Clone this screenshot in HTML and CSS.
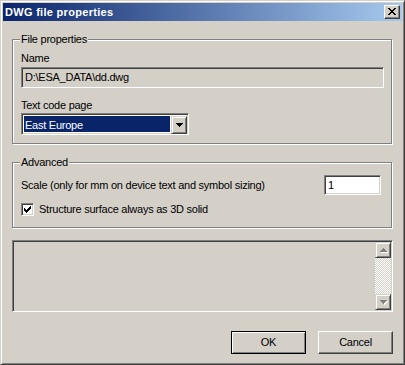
FILE: index.html
```html
<!DOCTYPE html>
<html>
<head>
<meta charset="utf-8">
<link rel="stylesheet" href="styles.css">
</head>
<body>
<div class="window">
  <div class="titlebar">
    <span class="title">DWG file properties</span>
    <span class="close-btn">
      <svg width="8" height="7" viewBox="0 0 8 7" shape-rendering="crispEdges"><path fill="#000" d="M0 0h2v1h-2zM6 0h2v1h-2zM1 1h2v1h-2zM5 1h2v1h-2zM2 2h4v1h-4zM3 3h2v1h-2zM2 4h4v1h-4zM1 5h2v1h-2zM5 5h2v1h-2zM0 6h2v1h-2zM6 6h2v1h-2z"/></svg>
    </span>
  </div>
  <div class="client">
    <div class="group group-file">
      <span class="legend">File properties</span>
      <div class="label">Name</div>
      <div class="edit edit-disabled edit-name">D:\ESA_DATA\dd.dwg</div>
      <div class="label label-gap">Text code page</div>
      <div class="combo">
        <div class="combo-value">East Europe</div>
        <div class="combo-btn">
          <svg width="7" height="4" viewBox="0 0 7 4" shape-rendering="crispEdges"><path fill="#000" d="M0 0h7v1h-7zM1 1h5v1h-5zM2 2h3v1h-3zM3 3h1v1h-1z"/></svg>
        </div>
      </div>
    </div>
    <div class="group group-adv">
      <span class="legend">Advanced</span>
      <div class="row-scale">
        <span class="text">Scale (only for mm on device text and symbol sizing)</span>
        <div class="edit edit-scale">1</div>
      </div>
      <div class="row-check">
        <span class="checkbox">
          <svg width="7" height="7" viewBox="0 0 7 7" shape-rendering="crispEdges"><path fill="#000" d="M6 0h1v1h-1zM5 1h2v1h-2zM0 2h1v1h-1zM4 2h3v1h-3zM0 3h2v1h-2zM3 3h3v1h-3zM0 4h5v1h-5zM1 5h3v1h-3zM2 6h1v1h-1z"/></svg>
        </span>
        <span class="text">Structure surface always as 3D solid</span>
      </div>
    </div>
    <div class="listbox">
      <div class="list-body"></div>
      <div class="vscroll">
        <div class="sb-btn">
          <svg width="8" height="5" viewBox="0 0 8 5" shape-rendering="crispEdges"><path fill="#fff" d="M4 1h1v1h-1zM3 2h3v1h-3zM2 3h5v1h-5zM1 4h7v1h-7z"/><path fill="#808080" d="M3 0h1v1h-1zM2 1h3v1h-3zM1 2h5v1h-5zM0 3h7v1h-7z"/></svg>
        </div>
        <div class="sb-track"></div>
        <div class="sb-btn">
          <svg width="8" height="5" viewBox="0 0 8 5" shape-rendering="crispEdges"><path fill="#fff" d="M1 1h7v1h-7zM2 2h5v1h-5zM3 3h3v1h-3zM4 4h1v1h-1z"/><path fill="#808080" d="M0 0h7v1h-7zM1 1h5v1h-5zM2 2h3v1h-3zM3 3h1v1h-1z"/></svg>
        </div>
      </div>
    </div>
    <div class="buttons">
      <div class="btn btn-default">OK</div>
      <div class="btn">Cancel</div>
    </div>
  </div>
</div>
</body>
</html>
```
FILE: styles.css
```css
* { box-sizing: border-box; }
html, body { margin: 0; padding: 0; }
body {
  background: #d4d0c8;
  font-family: "Liberation Sans", Arial, sans-serif;
  font-size: 11px;
  letter-spacing: -0.25px;
  color: #000;
}
.window {
  width: 405px;
  height: 365px;
  background: #d4d0c8;
  border: 1px solid;
  border-color: #d4d0c8 #404040 #404040 #d4d0c8;
  box-shadow: inset 1px 1px #fff, inset -1px -1px #808080;
  padding: 2px;
}
.titlebar {
  height: 18px;
  background: linear-gradient(to right, #0a246a, #a6caf0);
  display: flex;
  align-items: center;
  justify-content: space-between;
  padding: 0 2px 0 2px;
}
.title {
  color: #fff;
  font-weight: bold;
  letter-spacing: 0.3px;
  line-height: 18px;
}
.close-btn {
  width: 16px;
  height: 14px;
  background: #d4d0c8;
  border: 1px solid;
  border-color: #fff #404040 #404040 #fff;
  box-shadow: inset -1px -1px #808080;
  display: flex;
  align-items: flex-start;
  padding: 2px 0 0 3px;
}
.close-btn svg { display: block; }
.client {
  padding: 18px 9px 0 9px;
}
.group {
  position: relative;
  width: 380px;
  border: 1px solid #808080;
  box-shadow: inset 1px 1px #fff, 1px 1px #fff;
}
.legend {
  position: absolute;
  top: -7px;
  left: 7px;
  padding: 0 1px;
  line-height: 13px;
  background: #d4d0c8;
}
.group-file { padding: 12px 0 8px 8px; }
.label { line-height: 13px; height: 13px; }
.label-gap { margin-top: 11px; }
.edit {
  border: 1px solid;
  border-color: #808080 #fff #fff #808080;
  box-shadow: inset 1px 1px #404040, inset -1px -1px #d4d0c8;
  padding: 0 3px;
  white-space: nowrap;
}
.edit-disabled { background: #d4d0c8; }
.edit-name {
  margin-top: 2px;
  width: 363px;
  height: 21px;
  line-height: 19px;
}
.combo {
  margin-top: 1px;
  width: 168px;
  height: 22px;
  border: 1px solid;
  border-color: #808080 #fff #fff #808080;
  box-shadow: inset 1px 1px #404040, inset -1px -1px #d4d0c8;
  padding: 2px;
  background: #fff;
  display: flex;
  gap: 1px;
  padding-right: 1px;
  padding-bottom: 1px;
}
.combo {
  padding: 1px 1px 1px 1px;
}
.combo-value {
  flex: 1;
  background: #0a246a;
  color: #fff;
  line-height: 18px;
  padding-left: 1px;
  margin: 1px 0 1px 1px;
}
.combo-btn {
  width: 16px;
  height: 18px;
  margin-top: 1px;
  background: #d4d0c8;
  border: 1px solid;
  border-color: #d4d0c8 #404040 #404040 #d4d0c8;
  box-shadow: inset 1px 1px #fff, inset -1px -1px #808080;
  display: flex;
  align-items: center;
  justify-content: center;
}
.combo-btn svg { display: block; }
.group-adv {
  margin-top: 18px;
  padding: 12px 10px 11px 8px;
}
.row-scale {
  display: flex;
  align-items: center;
  justify-content: space-between;
  height: 20px;
}
.text { line-height: 13px; white-space: nowrap; }
.edit-scale {
  width: 57px;
  height: 20px;
  line-height: 18px;
  background: #fff;
  padding-left: 3px;
}
.row-check {
  margin-top: 8px;
  display: flex;
  align-items: center;
  gap: 5px;
  height: 13px;
}
.checkbox {
  width: 13px;
  height: 13px;
  background: #fff;
  border: 1px solid;
  border-color: #808080 #fff #fff #808080;
  box-shadow: inset 1px 1px #404040, inset -1px -1px #d4d0c8;
  padding: 2px 0 0 2px;
  display: flex;
  align-items: flex-start;
}
.checkbox svg { display: block; }
.listbox {
  margin-top: 12px;
  height: 72px;
  border: 1px solid;
  border-color: #808080 #fff #fff #808080;
  box-shadow: inset 1px 1px #404040, inset -1px -1px #d4d0c8;
  padding: 1px;
  display: flex;
}
.list-body { flex: 1; }
.vscroll {
  width: 16px;
  display: flex;
  flex-direction: column;
}
.sb-btn {
  width: 16px;
  height: 16px;
  background: #d4d0c8;
  border: 1px solid;
  border-color: #d4d0c8 #404040 #404040 #d4d0c8;
  box-shadow: inset 1px 1px #fff, inset -1px -1px #808080;
  display: flex;
  align-items: center;
  justify-content: center;
  padding-left: 1px;
}
.sb-btn svg { display: block; }
.sb-track {
  flex: 1;
  background: repeating-conic-gradient(#fff 0 25%, #d4d0c8 0 50%) 0 0 / 2px 2px;
}
.buttons {
  margin-top: 19px;
  display: flex;
  justify-content: flex-end;
  gap: 12px;
}
.btn {
  width: 75px;
  height: 23px;
  border: 1px solid;
  border-color: #fff #404040 #404040 #fff;
  box-shadow: inset -1px -1px #808080;
  display: flex;
  align-items: center;
  justify-content: center;
  line-height: 13px;
}
.btn-default {
  border-color: #000;
  box-shadow: inset 1px 1px #fff, inset -1px -1px #808080;
}
```
